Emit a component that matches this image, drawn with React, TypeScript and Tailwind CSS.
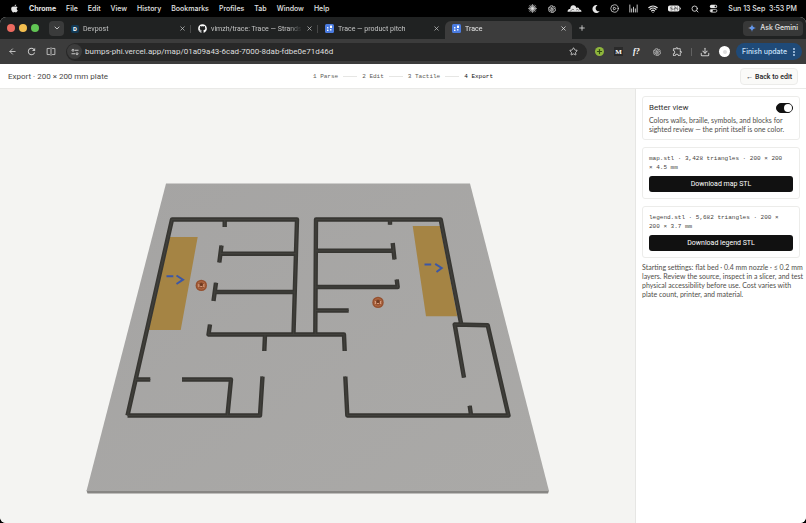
import type { ReactNode } from "react";
import { ArrowLeft, ChevronDown, CirclePlay, Download, Plus, Search, Star, Wifi, X } from "lucide-react";
import { FaApple, FaGithub, FaMoon } from "react-icons/fa";
import { AiOutlineOpenAI } from "react-icons/ai";
import { MdOutlineExtension, MdRefresh } from "react-icons/md";

const menus = ["File", "Edit", "View", "History", "Bookmarks", "Profiles", "Tab", "Window", "Help"];

const walls = [
  "M127.5 415.5L172 219.5H297L293.5 334",
  "M127.5 415.5H260L262.5 376.5",
  "M224.7 220V227",
  "M221.5 245.5L219.3 262.5M221 253.7H295.5",
  "M216 282.7L213.5 301M215 292H294.5",
  "M210 324.5L208.5 334.5H344L344.7 351",
  "M265 335L264.3 351",
  "M136 379.5H150.3M182 379.5H231L227.5 415",
  "M315.3 334L316 219.5H440.7L461 323",
  "M390 220V224.7",
  "M316 250.8H394M392.7 243L394.5 259.5",
  "M316 287H397.7L396.7 279.5",
  "M316 310.5H348.7",
  "M464 377.7L454.7 324.5L487.7 325.3L508.5 415.5H347.3L345.3 376.5",
  "M469.7 405.7L471 415",
];

function Burst() {
  return (
    <svg viewBox="0 0 16 16" className="size-[9px]" stroke="currentColor" strokeWidth="1.2" strokeLinecap="round">
      <path d="M8 1V15M1 8H15M3 3L13 13M13 3L3 13M5.500 2L10.500 14M10.500 2L5.500 14M2 5.500L14 10.500M14 5.500L2 10.500" />
    </svg>
  );
}

function CloudIcon() {
  return (
    <svg viewBox="0 0 28 16" className="h-[9px] w-[15px]">
      <path fill="currentColor" d="M1 14C1 10 4 9 6 9C6 4 9 1 13 2C16 2.500 17 5 17 7C20 5 23 7 23 10C26 10 27 12 27 14Z" />
      <path d="M5 14L11 9L13 11M17 11L20 9.500L22 12" fill="none" stroke="#222" strokeWidth="1" />
    </svg>
  );
}

function BarsIcon() {
  return (
    <svg viewBox="0 0 16 16" className="size-[9px]" stroke="currentColor" strokeWidth="1.500" fill="none">
      <path d="M1.500 1V15M14.500 1V15M4.700 8V15M8 5V15M11.300 8V15" />
    </svg>
  );
}

function BatteryIcon() {
  return (
    <svg viewBox="0 0 26 14" className="h-[7px] w-[13px]">
      <rect x="0" y="1" width="23" height="12" rx="3.500" fill="#eee" />
      <rect x="24" y="5" width="2" height="4" rx="1" fill="#aaa" />
      <path d="M9 4H5.500V7H8.500V10H5M12 4H15V7H12V10H15M19 3L17 7.500H20L18.500 11" fill="none" stroke="#333" strokeWidth="1.200" />
    </svg>
  );
}

function ControlCenterIcon() {
  return (
    <svg viewBox="0 0 16 16" className="size-[9px]">
      <rect x="1.500" y="1.500" width="13" height="5.500" rx="2.750" fill="currentColor" />
      <circle cx="11.500" cy="4.250" r="1.500" fill="#000" />
      <rect x="2" y="9.500" width="12" height="5" rx="2.500" fill="none" stroke="currentColor" strokeWidth="1.400" />
      <circle cx="4.700" cy="12" r="2.200" fill="currentColor" />
    </svg>
  );
}

function SplitIcon() {
  return (
    <svg viewBox="0 0 18 16" className="h-[9px] w-[10px]" fill="none" stroke="currentColor" strokeWidth="1.600">
      <path d="M7 2.500H2V13.500H7M11 2.500H16V13.500H11M9 0.500V15.500" />
    </svg>
  );
}

function SiteIcon() {
  return (
    <svg viewBox="0 0 16 16" className="size-[8px]" fill="none" stroke="currentColor" strokeWidth="2">
      <circle cx="4" cy="4.500" r="2" />
      <path d="M8 4.500H15M1 11.500H8" />
      <circle cx="12" cy="11.500" r="2" />
    </svg>
  );
}

function TraceIcon() {
  return (
    <svg viewBox="0 0 18 18" className="size-[9px] shrink-0">
      <rect width="18" height="18" rx="3" fill="#4a7be0" />
      <g fill="#fff">
        <rect x="10" y="3" width="4" height="5" rx="1" />
        <rect x="4" y="6" width="3" height="3" rx="1" />
        <rect x="4" y="11" width="3" height="3" rx="1" />
        <rect x="10" y="10" width="3" height="3" rx="1" />
      </g>
    </svg>
  );
}

function GeminiIcon() {
  return (
    <svg viewBox="0 0 16 16" className="size-[8px]">
      <defs>
        <linearGradient id="spark" x1="0" x2="1" y1="0.300" y2="0.700">
          <stop offset="0" stopColor="#e8a05c" />
          <stop offset="0.350" stopColor="#6a9be8" />
          <stop offset="1" stopColor="#4d86ef" />
        </linearGradient>
      </defs>
      <path d="M8 0C8.700 5 11 7.300 16 8C11 8.700 8.700 11 8 16C7.300 11 5 8.700 0 8C5 7.300 7.300 5 8 0Z" fill="url(#spark)" />
    </svg>
  );
}

function Tab({ icon, title, active, divider }: { icon: ReactNode; title: string; active?: boolean; divider?: boolean }) {
  return (
    <div className={`relative flex h-full min-w-0 flex-1 items-center gap-[4px] pb-[3px] pl-[7px] pr-[5px] ${active ? "rounded-t-md bg-[#3c3c3c] text-[#e8e8e8]" : "text-[#c3c4c4]"}`}>
      {icon}
      <span className="min-w-0 flex-1 overflow-hidden whitespace-nowrap [mask-image:linear-gradient(to_right,black_85%,transparent)]">{title}</span>
      <button aria-label={`Close ${title}`} className="shrink-0"><X className="size-[7px]" strokeWidth={2.5} /></button>
      {divider && <span className="absolute right-0 h-[8px] w-px bg-[#464747]" />}
    </div>
  );
}

function Plate() {
  return (
    <svg viewBox="0 89 635 434" className="block h-full w-full" role="img" aria-label="Preview of the map plate">
      <defs>
        <linearGradient id="plate" x1="0" y1="0" x2="1" y2="1">
          <stop offset="0" stopColor="#a5a4a3" />
          <stop offset="1" stopColor="#aaa9a7" />
        </linearGradient>
      </defs>
      <path d="M86.500 490.500H549L548 493.500H87.500Z" fill="#878684" />
      <path d="M166 183.500H470L549 491H86.500Z" fill="url(#plate)" />
      <path d="M169.700 237H197.700L180.700 330H148.700ZM412.700 226H440L457.300 316.300H426Z" fill="#a58444" />
      <path d="M166.500 276.300H173.300M176.500 275.500L183 279.700L176.500 284M424.500 264.400H431.200M435.200 263.800L441.700 268L436.500 272" fill="none" stroke="#3c57a6" strokeWidth="2" />
      <g fill="none" strokeLinejoin="round">
        <path d={walls.join("")} stroke="#373632" strokeWidth="4.400" />
        <path d={walls.join("")} stroke="#41403c" strokeWidth="1.200" />
      </g>
      {[[201.3, 285.4], [378, 302.4]].map(([x, y]) => (
        <g key={x} transform={`translate(${x} ${y})`}>
          <circle r="5.700" fill="#96512f" />
          <circle r="3.800" fill="none" stroke="#b06a45" strokeWidth="1" />
          <path d="M-2.500 -1.500V1.500M2.500 -1.500V1.500M-1 1H1" stroke="#d39a7b" strokeWidth="1.200" />
          <circle r="1.500" cy="-1" fill="#6e3a20" />
        </g>
      ))}
    </svg>
  );
}

function DownloadCard({ lines, action }: { lines: string[]; action: string }) {
  return (
    <section className="rounded-[3px] border border-[#ececea] p-[6px]">
      <p className="whitespace-nowrap pb-[4px] font-['Liberation_Mono',monospace] text-[6px] leading-[9px] text-[#454340]">
        {lines[0]}<br />{lines[1]}
      </p>
      <button className="block h-[16px] w-full rounded-[3px] bg-[#111] text-[7px] font-normal leading-none text-white">{action}</button>
    </section>
  );
}

export default function App() {
  return (
    <div className="flex h-screen flex-col overflow-hidden bg-black font-['Roboto',sans-serif] text-[7px] leading-[10px]">
      <nav className="flex h-[17px] shrink-0 items-center justify-between bg-black pl-[10px] pr-[9px] font-['Inter',sans-serif] font-medium text-[#e6e6e6]">
        <div className="flex items-center gap-[10px]">
          <FaApple className="size-[9px]" />
          <span className="font-bold">Chrome</span>
          {menus.map((m) => <span key={m}>{m}</span>)}
        </div>
        <div className="flex items-center gap-[10px]">
          <Burst />
          <AiOutlineOpenAI className="size-[10px]" />
          <CloudIcon />
          <FaMoon className="size-[8px]" />
          <CirclePlay className="size-[9px]" />
          <BarsIcon />
          <Wifi className="size-[10px]" strokeWidth={3} />
          <BatteryIcon />
          <Search className="size-[8px]" strokeWidth={2.5} />
          <ControlCenterIcon />
          <span className="whitespace-pre">Sun 13 Sep  3:53 PM</span>
        </div>
      </nav>

      <div className="flex min-h-0 flex-1 flex-col overflow-hidden rounded-[6px] bg-[#f4f4f2]">
        <div className="flex h-[22px] shrink-0 items-center bg-[#202222] pl-[7px] pr-[3px]">
          <div className="flex gap-[4px]">
            <span className="size-[8px] rounded-full bg-[#ec6a5f]" />
            <span className="size-[8px] rounded-full bg-[#f4bf4f]" />
            <span className="size-[8px] rounded-full bg-[#61c554]" />
          </div>
          <button aria-label="Search tabs" className="ml-[10px] flex size-[15px] items-center justify-center rounded-[4px] bg-[#3a3b3b] text-[#ddd]">
            <ChevronDown className="size-[8px]" strokeWidth={2.5} />
          </button>
          <div className="flex h-full min-w-0 max-w-[508px] flex-1 items-end pt-[4px]">
            <Tab icon={<span className="flex size-[8px] shrink-0 items-center justify-center rounded-[2px] bg-[#123a56] text-[6px] font-bold leading-none text-white">D</span>} title="Devpost" divider />
            <Tab icon={<FaGithub className="size-[9px] shrink-0 text-white" />} title="vimzh/trace: Trace — Strands" divider />
            <Tab icon={<TraceIcon />} title="Trace — product pitch" />
            <Tab icon={<TraceIcon />} title="Trace" active />
          </div>
          <button aria-label="New tab" className="ml-[6px] text-[#ddd]"><Plus className="size-[8px]" strokeWidth={2.5} /></button>
          <button className="ml-auto flex h-[15px] items-center gap-[4px] rounded-[4px] bg-[#373838] px-[5px] font-['Inter',sans-serif] font-medium text-[#e3e3e3]">
            <GeminiIcon />Ask Gemini
          </button>
        </div>

        <div className="flex h-[25px] shrink-0 items-center bg-[#3c3c3c] pl-[8px] pr-[4px] text-[#c9c9c9]">
          <div className="flex items-center gap-[9px]">
            <button aria-label="Back"><ArrowLeft className="size-[9px]" strokeWidth={2.5} /></button>
            <button aria-label="Reload"><MdRefresh className="size-[11px]" /></button>
            <button aria-label="Split view"><SplitIcon /></button>
          </div>
          <div className="ml-[10px] flex h-[18px] min-w-0 flex-1 items-center rounded-full bg-[#282828] pl-px pr-[9px]">
            <button aria-label="Site information" className="flex size-[15px] items-center justify-center rounded-full bg-[#3c3c3c]"><SiteIcon /></button>
            <input aria-label="Address" readOnly value="bumps-phi.vercel.app/map/01a09a43-6cad-7000-8dab-fdbe0e71d46d" className="ml-[3px] min-w-0 flex-1 bg-transparent text-[8px] text-[#dedede] outline-none" />
            <button aria-label="Bookmark"><Star className="size-[9px]" strokeWidth={2.5} /></button>
          </div>
          <div className="ml-[8px] flex items-center gap-[10px]">
            <span className="flex size-[9px] items-center justify-center rounded-full bg-[#8fb63c] text-[#2f4a12]"><Plus className="size-[7px]" strokeWidth={4} /></span>
            <span className="flex size-[9px] items-center justify-center bg-[#2a2a2a] font-['Liberation_Serif',serif] text-[7px] font-bold text-white">M</span>
            <span className="w-[9px] font-['Liberation_Serif',serif] text-[8px] font-bold italic text-white">f?</span>
            <AiOutlineOpenAI className="size-[10px]" />
            <MdOutlineExtension className="size-[11px]" />
          </div>
          <span className="mx-[8px] h-[8px] w-px bg-[#626262]" />
          <Download className="size-[10px]" strokeWidth={2.5} />
          <span className="ml-[9px] flex size-[11px] items-center justify-center rounded-full bg-white"><span className="size-[4px] rounded-full bg-[#ddd]" /></span>
          <button className="ml-[6px] flex h-[17px] items-center gap-[6px] rounded-full bg-[#1f4a78] pl-[6px] pr-[7px] font-['Inter',sans-serif] font-medium text-[#c8e0fa]">
            Finish update
            <svg viewBox="0 0 4 16" className="h-[8px] w-[2px]" fill="currentColor"><circle cx="2" cy="2" r="1.800" /><circle cx="2" cy="8" r="1.800" /><circle cx="2" cy="14" r="1.800" /></svg>
          </button>
        </div>

        <header className="grid h-[25px] shrink-0 grid-cols-[1fr_auto_1fr] items-center border-b border-[#e9e9e7] bg-white px-[8px] pt-px">
          <h1 className="text-[8px] text-[#4a4946]">Export · 200 × 200 mm plate</h1>
          <ol className="flex items-center gap-[5px] font-['Liberation_Mono',monospace] text-[6px] text-[#5d5b58]">
            <li>1 Parse</li><li aria-hidden className="h-px w-[14px] bg-[#e6e6e4]" />
            <li>2 Edit</li><li aria-hidden className="h-px w-[14px] bg-[#e6e6e4]" />
            <li>3 Tactile</li><li aria-hidden className="h-px w-[14px] bg-[#e6e6e4]" />
            <li className="text-[#111]">4 Export</li>
          </ol>
          <button className="flex h-[17px] items-center justify-self-end rounded-[4px] border border-[#ececea] bg-[#fafaf8] px-[5px] font-medium text-[#222]">← Back to edit</button>
        </header>

        <div className="flex min-h-0 flex-1">
          <main className="min-w-0 flex-1 bg-[#f4f4f2]"><Plate /></main>
          <aside className="flex w-[171px] shrink-0 flex-col gap-[5px] border-l border-[#e6e6e4] bg-white px-[6px] py-[7px]">
            <div className="flex flex-col gap-[7px]">
              <section className="rounded-[3px] border border-[#ececea] px-[6px] py-[5px]">
                <div className="flex items-center justify-between">
                  <label htmlFor="better-view" className="text-[8px] leading-[12px] text-[#333230]">Better view</label>
                  <input id="better-view" type="checkbox" role="switch" defaultChecked className="h-[10px] w-[17px] appearance-none rounded-full border border-[#111] bg-[#111] after:ml-[7px] after:block after:size-[8px] after:rounded-full after:bg-white" />
                </div>
                <p className="pt-[2px] font-['Lato',sans-serif] text-[7px] leading-[9px] text-[#4f4d49]">Colors walls, braille, symbols, and blocks for sighted review — the print itself is one color.</p>
              </section>
              <DownloadCard lines={["map.stl · 3,428 triangles · 200 × 200", "× 4.5 mm"]} action="Download map STL" />
              <DownloadCard lines={["legend.stl · 5,682 triangles · 200 ×", "200 × 3.7 mm"]} action="Download legend STL" />
            </div>
            <p className="whitespace-nowrap font-['Lato',sans-serif] text-[7px] leading-[9px] text-[#4f4d49]">
              Starting settings: flat bed · 0.4 mm nozzle · ≤ 0.2 mm<br />
              layers. Review the source, inspect in a slicer, and test<br />
              physical accessibility before use. Cost varies with<br />
              plate count, printer, and material.
            </p>
          </aside>
        </div>
      </div>
    </div>
  );
}
